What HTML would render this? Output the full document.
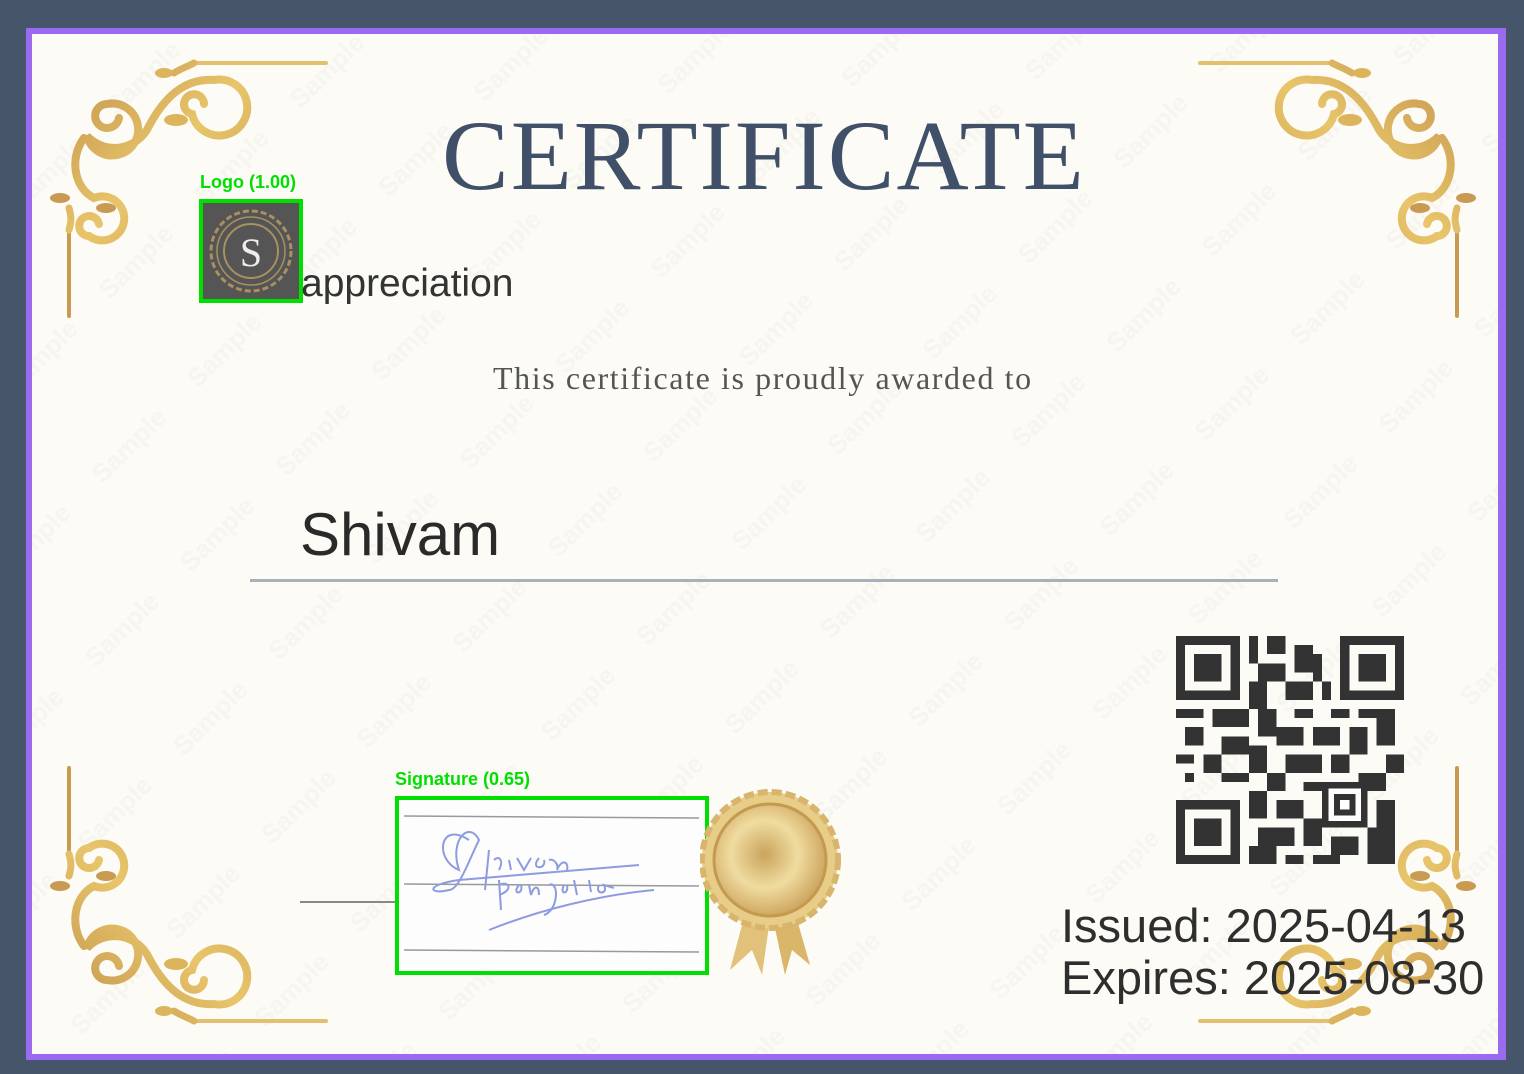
<!DOCTYPE html>
<html><head><meta charset="utf-8"><style>
html,body{margin:0;padding:0}
body{width:1524px;height:1074px;background:#465569;position:relative;overflow:hidden;font-family:"Liberation Sans",sans-serif}
.frame{position:absolute;left:26px;top:28px;width:1480px;height:1032px;background:#9a6af0}
.paper{position:absolute;left:32px;top:34px;width:1466px;height:1020px;background:#fcfbf6;overflow:hidden}
.wm{position:absolute;left:0;top:0;width:1524px;height:1074px}
.abs{position:absolute;white-space:nowrap}
</style></head><body>
<div class="frame"></div>
<div class="paper"></div>
<svg class="wm" viewBox="0 0 1524 1074">
<defs><pattern id="p" width="135" height="125" patternUnits="userSpaceOnUse" patternTransform="rotate(-45)">
<text x="0" y="40" font-family="Liberation Sans" font-weight="bold" font-size="26" fill="#000" fill-opacity="0.022">Sample</text></pattern></defs>
<rect x="32" y="34" width="1466" height="1020" fill="url(#p)"/>
</svg>
<svg class="wm" viewBox="0 0 1524 1074">
<defs>
<linearGradient id="g" gradientUnits="userSpaceOnUse" x1="0" y1="0" x2="200" y2="200"><stop offset="0" stop-color="#c0904a"/><stop offset="0.5" stop-color="#e8c56a"/><stop offset="1" stop-color="#c99a52"/></linearGradient>
<g id="c" fill="none" stroke="url(#g)" stroke-linecap="round">
<path d="M55 60 a12 12 0 1 1 -12 -14 a26 26 0 1 1 -20 32 a38 38 0 0 0 62 -10 C100 40 120 20 150 22 a28 28 0 1 1 -22 34 a10 10 0 1 1 12 -10" stroke-width="8"/>
<path d="M20 80 C5 100 10 130 30 140 a22 22 0 1 1 -5 38 a10 10 0 1 1 10 -12" stroke-width="8"/>
<path d="M130 5 L262 5" stroke="#e2c070" stroke-width="4"/>
<path d="M5 170 L5 258" stroke="#c99a52" stroke-width="4"/>
<path d="M110 15 C118 10 125 8 130 5" stroke-width="7"/>
<path d="M5 150 C8 160 7 165 5 172" stroke-width="7"/>
<ellipse cx="100" cy="15" rx="9" ry="5" fill="#dcb45c" stroke="none"/>
<ellipse cx="112" cy="62" rx="12" ry="6" fill="#dcb45c" stroke="none"/>
<ellipse cx="-4" cy="140" rx="10" ry="5" fill="#c99a52" stroke="none"/>
<ellipse cx="42" cy="150" rx="10" ry="5" fill="#c99a52" stroke="none"/>
</g>
</defs>
<use href="#c" transform="translate(64,58)"/>
<use href="#c" transform="translate(1462,58) scale(-1,1)"/>
<use href="#c" transform="translate(64,1026) scale(1,-1)"/>
<use href="#c" transform="translate(1462,1026) scale(-1,-1)"/>
</svg>

<div class="abs" style="left:442px;top:96px;font-family:'Liberation Serif',serif;font-size:100px;color:#3f5068;letter-spacing:2px;line-height:120px">CERTIFICATE</div>

<div class="abs" style="left:200px;top:172px;font-size:18px;color:#00e000;font-weight:bold">Logo (1.00)</div>
<div class="abs" style="left:199px;top:199px;width:96px;height:96px;border:4px solid #00e000;background:#555">
<svg width="96" height="96" viewBox="0 0 96 96"><circle cx="48" cy="48" r="40" fill="none" stroke="#a89060" stroke-width="3" stroke-dasharray="6 3"/><circle cx="48" cy="48" r="27" fill="none" stroke="#a89060" stroke-width="2"/><circle cx="48" cy="48" r="34" fill="none" stroke="#a89060" stroke-width="1.5"/><text x="48" y="63" text-anchor="middle" font-family="Liberation Serif" font-size="40" fill="#eee">S</text></svg></div>
<div class="abs" style="left:301px;top:260px;font-size:39px;color:#333;line-height:48px">appreciation</div>

<div class="abs" style="left:493px;top:360px;font-family:'Liberation Serif',serif;font-size:32px;color:#555;letter-spacing:1.6px">This certificate is proudly awarded to</div>

<div class="abs" style="left:300px;top:500px;font-size:60px;color:#2a2a2a;line-height:70px">Shivam</div>
<div class="abs" style="left:250px;top:579px;width:1028px;height:3px;background:#a9b0ba"></div>

<div class="abs" style="left:300px;top:901px;width:98px;height:2px;background:#888"></div>
<div class="abs" style="left:395px;top:769px;font-size:18px;color:#00e000;font-weight:bold">Signature (0.65)</div>
<div class="abs" style="left:395px;top:796px;width:306px;height:171px;border:4px solid #00e000;background:#fdfdfd">
<svg width="306" height="171" viewBox="0 0 306 171"><g stroke="#999" stroke-width="1.5"><line x1="5" y1="16" x2="300" y2="18"/><line x1="5" y1="84" x2="300" y2="86"/><line x1="5" y1="150" x2="300" y2="152"/></g>
<g fill="none" stroke="#8d9ce0" stroke-width="2"><path d="M70 40 C40 20 35 60 60 70 C50 40 70 20 80 40 C70 60 60 90 50 90 C30 95 25 85 60 80 L240 65"/><path d="M90 50 L86 90 M95 60 C100 55 105 60 100 70 M110 60 L112 70 M118 58 L125 70 L132 58 M140 58 C130 70 148 70 145 60 M150 60 C155 58 160 65 158 70 C163 58 170 62 168 70"/><path d="M100 80 L102 110 M100 85 C110 80 115 90 100 95 M120 85 C112 95 125 95 122 85 M130 85 L132 95 C135 85 140 85 140 95 M150 85 C160 80 160 110 145 115 M165 85 C160 95 170 95 168 85 M175 80 L178 95 M190 80 L192 92 M200 85 C195 95 210 95 205 85 L215 88"/><path d="M90 130 C140 110 200 95 255 90"/></g></svg></div>

<svg class="abs" style="left:700px;top:785px" width="145" height="195" viewBox="0 0 145 195">
<defs><radialGradient id="sg" cx="0.45" cy="0.45" r="0.6"><stop offset="0" stop-color="#c9a45c"/><stop offset="0.5" stop-color="#f0dca0"/><stop offset="1" stop-color="#c89d55"/></radialGradient></defs>
<polygon points="50,110 30,185 52,165 62,190 72,120" fill="#e2c27a"/>
<polygon points="90,110 110,180 92,165 85,190 70,120" fill="#d9b66a"/>
<circle cx="70" cy="75" r="68" fill="#e8cd88" stroke="#d8b46c" stroke-width="6" stroke-dasharray="10 4"/>
<circle cx="70" cy="75" r="56" fill="url(#sg)" stroke="#c49a50" stroke-width="3"/>
</svg>

<svg class="abs" style="left:1176px;top:636px" width="228" height="228" viewBox="0 0 25 25" shape-rendering="crispEdges">
<g fill="#333">
<path d="M0 0h7v7h-7zM1 1v5h5v-5zM2 2h3v3h-3z" fill-rule="evenodd"/>
<path d="M18 0h7v7h-7zM19 1v5h5v-5zM20 2h3v3h-3z" fill-rule="evenodd"/>
<path d="M0 18h7v7h-7zM1 19v5h5v-5zM2 20h3v3h-3z" fill-rule="evenodd"/>
<rect x="8" y="0" width="1" height="3"/><rect x="10" y="0" width="2" height="2"/><rect x="13" y="1" width="2" height="3"/><rect x="9" y="3" width="3" height="2"/><rect x="15" y="2" width="1" height="3"/><rect x="8" y="5" width="2" height="3"/><rect x="12" y="5" width="3" height="2"/><rect x="16" y="5" width="1" height="2"/>
<rect x="0" y="8" width="3" height="1"/><rect x="4" y="8" width="4" height="2"/><rect x="9" y="8" width="2" height="3"/><rect x="13" y="8" width="2" height="1"/><rect x="17" y="8" width="2" height="1"/><rect x="20" y="8" width="4" height="1"/>
<rect x="1" y="10" width="2" height="2"/><rect x="5" y="11" width="3" height="2"/><rect x="11" y="10" width="3" height="2"/><rect x="15" y="10" width="3" height="2"/><rect x="19" y="10" width="2" height="3"/><rect x="22" y="9" width="2" height="3"/>
<rect x="0" y="13" width="2" height="1"/><rect x="3" y="13" width="2" height="2"/><rect x="8" y="12" width="2" height="3"/><rect x="12" y="13" width="4" height="2"/><rect x="17" y="13" width="2" height="2"/><rect x="23" y="13" width="2" height="2"/>
<rect x="1" y="15" width="1" height="1"/><rect x="5" y="15" width="3" height="1"/><rect x="10" y="15" width="2" height="2"/><rect x="14" y="16" width="4" height="1"/><rect x="20" y="15" width="3" height="2"/>
<rect x="8" y="17" width="2" height="3"/><rect x="11" y="18" width="3" height="2"/><rect x="16" y="16" width="5" height="5"/><rect x="22" y="18" width="2" height="3"/>
<rect x="9" y="21" width="4" height="2"/><rect x="14" y="20" width="2" height="3"/><rect x="17" y="22" width="3" height="2"/><rect x="21" y="21" width="3" height="4"/><rect x="8" y="23" width="3" height="2"/><rect x="12" y="24" width="2" height="1"/><rect x="15" y="24" width="3" height="1"/>
</g><rect x="18" y="18" width="1" height="1" fill="#fff"/><path d="M17 17h3v3h-3z" fill="none" stroke="#fff" stroke-width="0.6"/></svg>

<div class="abs" style="left:1061px;top:900px;font-size:47px;color:#2e2e2e;line-height:52px">Issued: 2025-04-13<br>Expires: 2025-08-30</div>
</body></html>
